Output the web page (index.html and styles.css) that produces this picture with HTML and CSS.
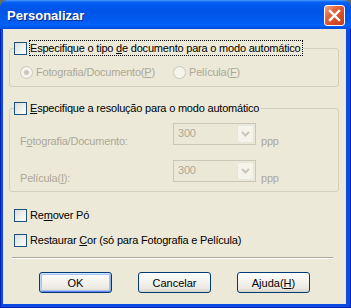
FILE: index.html
```html
<!DOCTYPE html>
<html lang="pt">

<head>
    <meta charset="UTF-8">
    <title>Personalizar</title>
    <link rel="stylesheet" href="styles.css">
</head>

<body>
    <div class="window">
        <div class="titlebar">
            <span class="title">Personalizar</span>
            <span class="close">
                <svg width="19" height="19" viewBox="0 0 19 19">
                    <path d="M5 5 L14 14 M14 5 L5 14" stroke="#fff" stroke-width="2.4" stroke-linecap="square" fill="none" />
                </svg>
            </span>
        </div>
        <div class="frame">
            <div class="client">
                <!-- tipo de documento -->
                <fieldset class="group group-type">
                    <legend class="legend">
                        <span class="check"></span>
                        <span class="label focus">Especifique o tipo <u>d</u>e documento para o modo automático</span>
                    </legend>
                    <div class="grid radios">
                        <div class="radio-item">
                            <span class="radio checked"></span>
                            <span class="dis">Fotografia/Documento(<u>P</u>)</span>
                        </div>
                        <div class="radio-item">
                            <span class="radio"></span>
                            <span class="dis">Película(<u>F</u>)</span>
                        </div>
                    </div>
                </fieldset>

                <!-- resolucao -->
                <fieldset class="group group-res">
                    <legend class="legend">
                        <span class="check"></span>
                        <span class="label"><u>E</u>specifique a resolução para o modo automático</span>
                    </legend>
                    <div class="grid res-row">
                        <span class="dis row-label">F<u>o</u>tografia/Documento:</span>
                        <div class="combo-wrap">
                            <div class="combo">
                                <span class="combo-value">300</span>
                                <span class="combo-btn">
                                    <svg width="9" height="6" viewBox="0 0 9 6">
                                        <path d="M1 1 L4.5 4.5 L8 1" stroke="#c9c7ba" stroke-width="2" fill="none" />
                                    </svg>
                                </span>
                            </div>
                            <span class="dis unit">ppp</span>
                        </div>
                    </div>
                    <div class="grid res-row">
                        <span class="dis row-label">Película(<u>I</u>):</span>
                        <div class="combo-wrap">
                            <div class="combo">
                                <span class="combo-value">300</span>
                                <span class="combo-btn">
                                    <svg width="9" height="6" viewBox="0 0 9 6">
                                        <path d="M1 1 L4.5 4.5 L8 1" stroke="#c9c7ba" stroke-width="2" fill="none" />
                                    </svg>
                                </span>
                            </div>
                            <span class="dis unit">ppp</span>
                        </div>
                    </div>
                </fieldset>

                <div class="option first">
                    <span class="check"></span>
                    <span class="label">Re<u>m</u>over Pó</span>
                </div>
                <div class="option">
                    <span class="check"></span>
                    <span class="label">Restaurar <u>C</u>or (só para Fotografia e Película)</span>
                </div>

                <div class="separator"></div>

                <div class="buttons">
                    <button class="btn default">OK</button>
                    <button class="btn">Cancelar</button>
                    <button class="btn">Ajuda(<u>H</u>)</button>
                </div>
            </div>
        </div>
    </div>
</body>

</html>
```

FILE: styles.css
```css
html {
    background: #6b6d5a;
}

body {
    margin: 0;
    font-family: "Liberation Sans", Arial, sans-serif;
    font-size: 11px;
    letter-spacing: -0.2px;
    color: #000;
}

.window {
    width: 351px;
    height: 308px;
    display: flex;
    flex-direction: column;
    border-radius: 7px 7px 0 0;
    overflow: hidden;
}

.titlebar {
    height: 29px;
    flex: none;
    display: flex;
    align-items: center;
    justify-content: space-between;
    padding: 0 6px 0 7px;
    box-sizing: border-box;
    background: linear-gradient(#4a9bff 0, #0a62f0 2px, #0058ee 5px, #0054e6 40%, #005cf2 75%, #0063f8 88%, #0047dc 100%);
}

.title {
    color: #fff;
    font-size: 13px;
    font-weight: bold;
    letter-spacing: 0;
    text-shadow: 1px 1px 0 #0a2a8a;
    padding-top: 2px;
}

.close {
    width: 21px;
    height: 21px;
    box-sizing: border-box;
    border: 1px solid #fff;
    border-radius: 3px;
    display: flex;
    align-items: center;
    justify-content: center;
    background: linear-gradient(135deg, #f0a686 0%, #e2663f 35%, #d24a27 70%, #c23a1b 100%);
    margin-top: 1px;
}

.frame {
    flex: 1;
    display: flex;
    padding: 0 5px 4px 3px;
    background: #0b4be2;
    box-shadow: inset 1px 0 #0020b8, inset -1px 0 #0020b8, inset 0 -1px #0020b8;
}

.client {
    flex: 1;
    background: #ece9d8;
    padding: 11px 7px 0 6px;
}

/* group boxes */
.group {
    margin: 0;
    border: 1px solid #d0d0bf;
    border-radius: 3px;
    padding: 0 0 6px 4px;
}

.group-res {
    margin-top: 13px;
    padding-bottom: 9px;
}

.legend {
    padding: 0;
    display: flex;
    align-items: center;
    height: 16px;
}

.check {
    width: 13px;
    height: 13px;
    box-sizing: border-box;
    border: 1px solid #1c5180;
    background: linear-gradient(135deg, #dcdcd7, #fff);
    flex: none;
}

.label {
    margin-left: 2px;
    border: 1px solid transparent;
    padding: 0 1px 0 0;
    line-height: 14px;
    white-space: nowrap;
}

.label.focus {
    border: 1px dotted #000;
}

.dis {
    color: #aca899;
}

.grid {
    display: grid;
    grid-template-columns: 153px auto;
    padding-left: 6px;
}

.radios {
    margin-top: 8px;
    height: 16px;
    align-items: center;
}

.radio-item {
    display: flex;
    align-items: center;
    gap: 3px;
}

.radio {
    width: 13px;
    height: 13px;
    box-sizing: border-box;
    border: 1px solid #cac8bb;
    border-radius: 50%;
    background: #f4f3ec;
    display: flex;
    align-items: center;
    justify-content: center;
}

.radio.checked::after {
    content: "";
    width: 5px;
    height: 5px;
    border-radius: 50%;
    background: #cac8bb;
}

.res-row {
    margin-top: 7px;
    align-items: end;
}

.res-row + .res-row {
    margin-top: 15px;
}

.row-label {
    margin-bottom: -3px;
    line-height: 14px;
}

.combo-wrap {
    display: flex;
    align-items: flex-end;
    gap: 5px;
}

.combo {
    width: 83px;
    height: 22px;
    box-sizing: border-box;
    border: 1px solid #c9c7ba;
    background: #ebe8d8;
    display: flex;
    justify-content: space-between;
    padding: 1px;
}

.combo-value {
    color: #aca899;
    padding: 2px 0 0 3px;
}

.combo-btn {
    width: 17px;
    box-sizing: border-box;
    border: 1px solid #e8e6da;
    border-radius: 2px;
    background: #f5f4ec;
    display: flex;
    align-items: center;
    justify-content: center;
}

.unit {
    margin-bottom: -3px;
    line-height: 14px;
}

/* checkboxes abaixo */
.option {
    display: flex;
    align-items: center;
    height: 16px;
    padding-left: 5px;
    margin-top: 9px;
}

.option.first {
    margin-top: 15px;
}

.separator {
    margin: 9px 6px 0 3px;
    border-top: 1px solid #aca899;
    border-bottom: 1px solid #fff;
}

.buttons {
    display: flex;
    gap: 26px;
    padding-left: 30px;
    margin-top: 13px;
}

.btn {
    width: 73px;
    height: 21px;
    border: 1px solid #003c74;
    border-radius: 3px;
    background: linear-gradient(#fff 0, #f5f4ef 40%, #ebe9e1 80%, #d8d3c6 100%);
    font-family: "Liberation Sans", Arial, sans-serif;
    font-size: 11px;
    color: #000;
    padding: 0;
}

.btn.default {
    box-shadow: inset 0 1px 0 #cee7ff, inset 1px 0 0 #bcd4f6, inset -1px 0 0 #89ade4, inset 0 -1px 0 #6982ee, inset 0 0 0 2px #a5c3f4;
}
```
